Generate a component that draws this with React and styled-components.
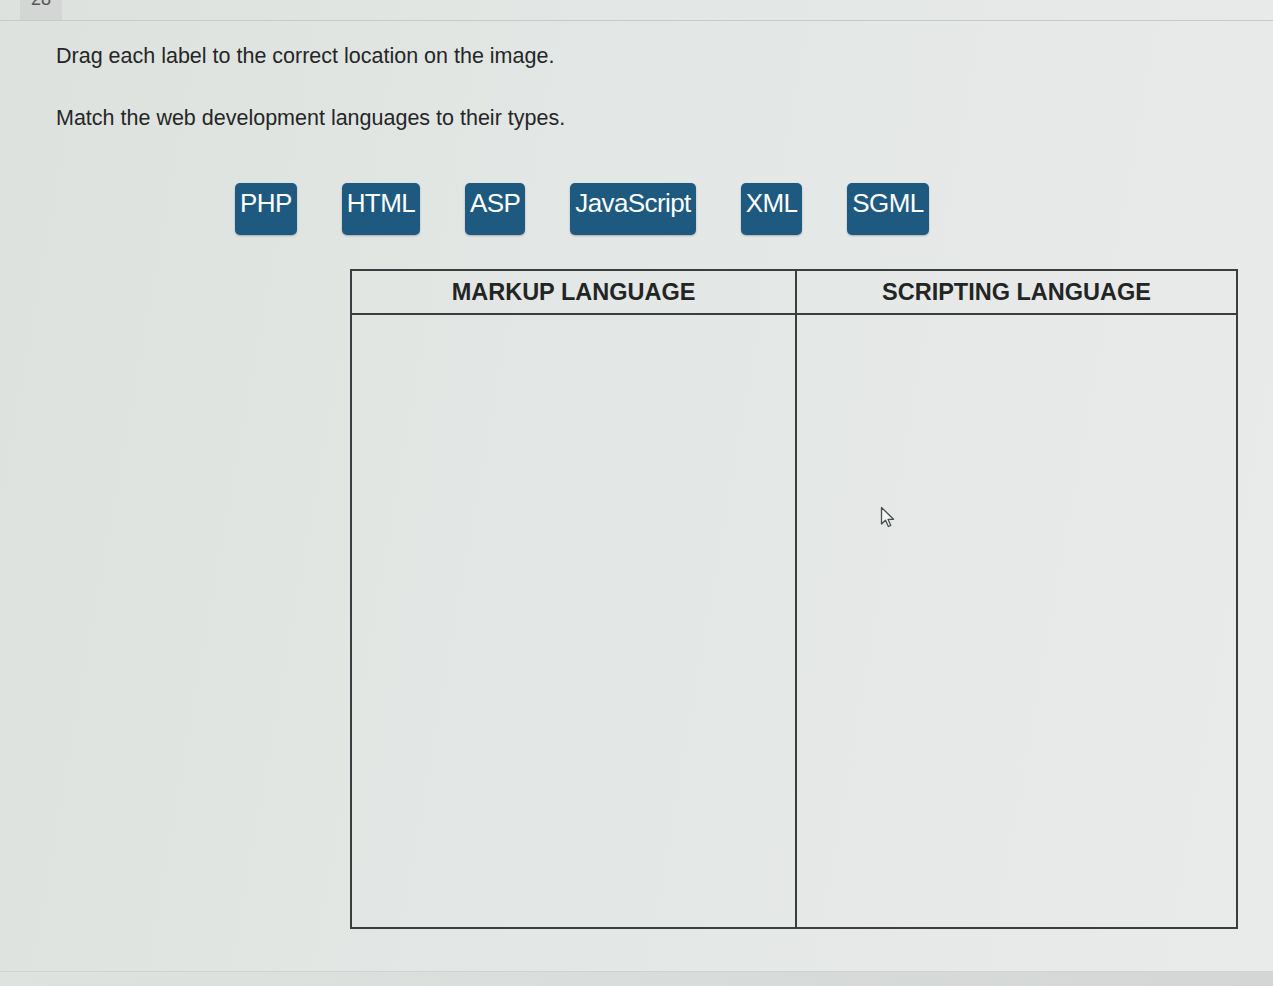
import styled, { createGlobalStyle } from "styled-components";

const GlobalStyle = createGlobalStyle`
	html, body {
		margin: 0;
		padding: 0;
	}
	body {
		font-family: "Liberation Sans", Arial, sans-serif;
		background: linear-gradient(100deg, #dde2de 0%, #e3e7e5 45%, #e9ebeb 100%);
		color: #262828;
		min-height: 986px;
		overflow: hidden;
	}
`;

const Page = styled.div`
	position: relative;
	width: 1273px;
	height: 986px;
	display: flex;
	flex-direction: column;
`;

const TopBar = styled.div`
	height: 20px;
	border-bottom: 1px solid #c6cac8;
	display: flex;
	padding-left: 20px;
`;

const QuestionNumber = styled.div`
	width: 42px;
	height: 20px;
	background: #d3d6d4;
	overflow: hidden;
	display: flex;
	justify-content: center;

	span {
		margin-top: -11px;
		font-size: 18px;
		line-height: 20px;
		color: #555;
	}
`;

const Instructions = styled.div`
	padding: 23px 0 0 56px;
	display: flex;
	flex-direction: column;
	gap: 37px;
`;

const Line = styled.p`
	margin: 0;
	font-size: 21.5px;
	line-height: 25px;
	color: #252727;
`;

const LabelRow = styled.div`
	display: flex;
	gap: 45px;
	padding: 52px 0 0 235px;
`;

const Tag = styled.div`
	background: #1e5a80;
	color: #fff;
	font-size: 26px;
	letter-spacing: -0.6px;
	line-height: 28px;
	padding: 6px 5px 18px;
	border-radius: 5px;
	box-shadow: 0 1px 2px rgba(0, 0, 0, 0.25);
`;

const Table = styled.div`
	margin: 34px 0 0 350px;
	width: 888px;
	height: 660px;
	border: 2px solid #3b3e3e;
	display: grid;
	grid-template-columns: 445px 1fr;
	grid-template-rows: 44px 1fr;
	box-sizing: border-box;
`;

const HeadCell = styled.div`
	display: flex;
	align-items: center;
	justify-content: center;
	font-size: 23.5px;
	font-weight: 700;
	color: #232525;
	border-bottom: 2px solid #3b3e3e;
	border-right: ${(p) => (p.$last ? "none" : "2px solid #3b3e3e")};
`;

const DropCell = styled.div`
	border-right: ${(p) => (p.$last ? "none" : "2px solid #3b3e3e")};
`;

const Pointer = styled.svg`
	position: absolute;
	left: 880px;
	top: 506px;
`;

const BottomEdge = styled.div`
	margin-top: auto;
	height: 14px;
	background: linear-gradient(90deg, #dfe3e0, #d3d6d5);
	border-top: 1px solid #cfd3d1;
`;

const labels = ["PHP", "HTML", "ASP", "JavaScript", "XML", "SGML"];

export default function App() {
	return (
		<>
			<GlobalStyle />
			<Page>
				<TopBar>
					<QuestionNumber>
						<span>28</span>
					</QuestionNumber>
				</TopBar>
				<Instructions>
					<Line>Drag each label to the correct location on the image.</Line>
					<Line>Match the web development languages to their types.</Line>
				</Instructions>
				<LabelRow>
					{labels.map((l) => (
						<Tag key={l}>{l}</Tag>
					))}
				</LabelRow>
				<Table>
					<HeadCell>MARKUP LANGUAGE</HeadCell>
					<HeadCell $last>SCRIPTING LANGUAGE</HeadCell>
					<DropCell />
					<DropCell $last />
				</Table>
				<BottomEdge />
				<Pointer width="16" height="24" viewBox="0 0 16 24">
					<path
						d="M1.5 1.5 L1.5 18 L5.5 14.2 L8.4 20.5 L10.8 19.4 L8 13.3 L13.5 13.3 Z"
						fill="#f4f5f4"
						stroke="#4a4d4d"
						strokeWidth="1.3"
						strokeLinejoin="round"
					/>
				</Pointer>
			</Page>
		</>
	);
}
